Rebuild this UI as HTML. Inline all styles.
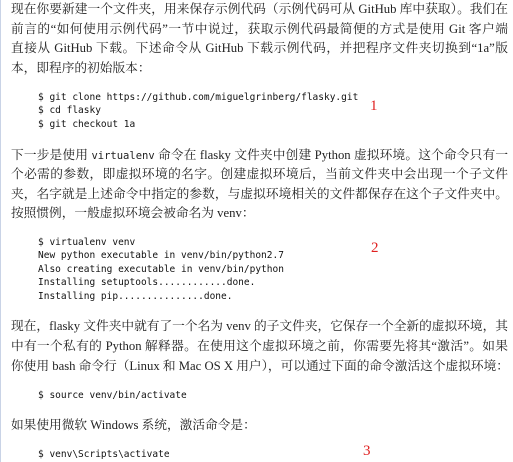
<!DOCTYPE html>
<html><head><meta charset="utf-8"><style>
body{margin:0;width:513px;height:462px;background:#fff;overflow:hidden;position:relative;border-left:1px solid #c9d3e6;box-sizing:border-box}
.t{position:absolute;left:10px;width:497px;font-family:"Liberation Serif","Noto Serif CJK SC",serif;font-size:12.7px;color:#222;white-space:nowrap;line-height:20px;height:20px;overflow:hidden}
.j{text-align:justify;text-align-last:justify}
.c{position:absolute;left:37px;font-family:"DejaVu Sans Mono","Liberation Mono",monospace;font-size:9.5px;color:#111;white-space:pre;line-height:13.4px}
.n{position:absolute;color:#e02020;font-family:"Liberation Serif",serif;font-size:15px}
</style></head><body>
<div class="t j" style="top:-1px">现在你要新建一个文件夹，用来保存示例代码（示例代码可从 GitHub 库中获取）。我们在</div>
<div class="t j" style="top:19px">前言的“如何使用示例代码”一节中说过，获取示例代码最简便的方式是使用 Git 客户端</div>
<div class="t j" style="top:38px">直接从 GitHub 下载。下述命令从 GitHub 下载示例代码，并把程序文件夹切换到“1a”版</div>
<div class="t" style="top:58px">本，即程序的初始版本：</div>
<div class="c" style="top:91px">$ git clone https://github.com/miguelgrinberg/flasky.git
$ cd flasky
$ git checkout 1a</div>
<div class="n" style="left:369px;top:98px">1</div>
<div class="t j" style="top:145px">下一步是使用 <span style="font-family:'DejaVu Sans Mono',monospace;font-size:10.5px">virtualenv</span> 命令在 flasky 文件夹中创建 Python 虚拟环境。这个命令只有一</div>
<div class="t j" style="top:164px">个必需的参数，即虚拟环境的名字。创建虚拟环境后，当前文件夹中会出现一个子文件</div>
<div class="t j" style="top:184px">夹，名字就是上述命令中指定的参数，与虚拟环境相关的文件都保存在这个子文件夹中。</div>
<div class="t" style="top:203px">按照惯例，一般虚拟环境会被命名为 venv：</div>
<div class="c" style="top:236px">$ virtualenv venv
New python executable in venv/bin/python2.7
Also creating executable in venv/bin/python
Installing setuptools............done.
Installing pip...............done.</div>
<div class="n" style="left:370px;top:240px">2</div>
<div class="t j" style="top:316px">现在，flasky 文件夹中就有了一个名为 venv 的子文件夹，它保存一个全新的虚拟环境，其</div>
<div class="t j" style="top:336px">中有一个私有的 Python 解释器。在使用这个虚拟环境之前，你需要先将其“激活”。如果</div>
<div class="t j" style="top:356px">你使用 bash 命令行（Linux 和 Mac OS X 用户），可以通过下面的命令激活这个虚拟环境：</div>
<div class="c" style="top:389px">$ source venv/bin/activate</div>
<div class="t" style="top:415px">如果使用微软 Windows 系统，激活命令是：</div>
<div class="c" style="top:448px">$ venv\Scripts\activate</div>
<div class="n" style="left:362px;top:443px">3</div>
</body></html>
